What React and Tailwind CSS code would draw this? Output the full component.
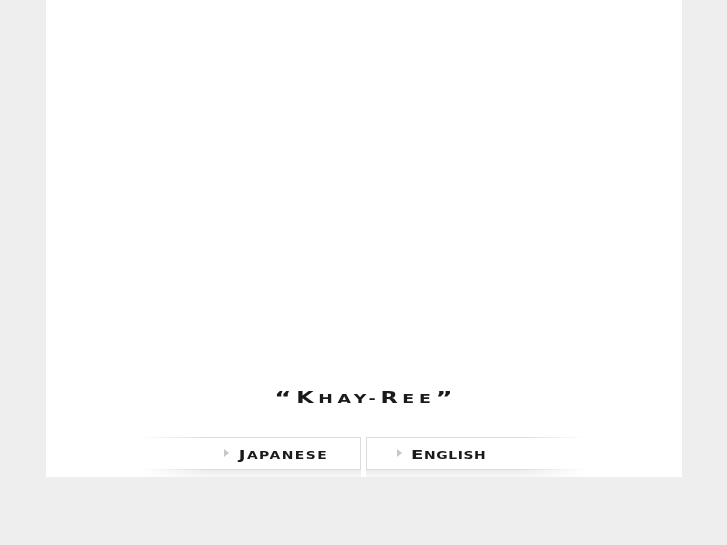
const font = { fontFamily: '"DejaVu Sans", "Liberation Sans", sans-serif' };

function SC({ parts, className = "" }) {
  return (
    <span className={`inline-block font-bold leading-none text-[#1a1a1a] ${className}`} style={font}>
      {parts.map(([t, cls], i) => (
        <span key={i} className={cls}>
          {t}
        </span>
      ))}
    </span>
  );
}

export default function App() {
  const fade = "[mask-image:linear-gradient(to_right,transparent,black_30%,black_100%)]";
  const fadeR = "[mask-image:linear-gradient(to_left,transparent,black_30%,black_100%)]";
  return (
    <div className="min-h-[545px] w-full bg-[#eeeeee]">
      <div className="mx-auto flex h-[477px] w-[636px] flex-col items-center justify-end bg-white">
        <div className="mb-[31px] flex justify-center">
          <SC
            className="origin-center scale-x-[1.45] tracking-[3.2px]"
            parts={[
              ["“", "text-[18px] relative top-[1px]"],
              ["K", "text-[15.5px]"],
              ["HAY-", "text-[12px]"],
              ["R", "text-[15.5px]"],
              ["EE", "text-[12px]"],
              ["”", "text-[18px] tracking-normal relative top-[1px]"],
            ]}
          />
        </div>
        <div className="relative mb-[7px] flex gap-[5px]">
          <div className="relative flex h-[33px] w-[221px] items-center justify-end pr-[34px]">
            <div className={`absolute inset-0 border border-l-0 border-[#dcdcdc] ${fade}`}></div>
            <div className={`absolute left-0 right-0 top-full h-[7px] bg-gradient-to-b from-[#ececec] to-[#f7f7f7] ${fade}`}></div>
            <span className="relative mr-[37px] h-0 w-0 translate-y-[-1px] border-y-[4px] border-l-[5px] border-y-transparent border-l-[#c8c8c8]"></span>
            <SC
              className="relative origin-right scale-x-[1.45] tracking-[1px]"
              parts={[["J", "text-[12.5px]"], ["APANES", "text-[9.6px]"], ["E", "text-[9.6px] tracking-normal"]]}
            />
          </div>
          <div className="relative flex h-[33px] w-[221px] items-center justify-start pl-[31px]">
            <div className={`absolute inset-0 border border-r-0 border-[#dcdcdc] ${fadeR}`}></div>
            <div className={`absolute left-0 right-0 top-full h-[7px] bg-gradient-to-b from-[#ececec] to-[#f7f7f7] ${fadeR}`}></div>
            <span className="relative mr-[9px] h-0 w-0 translate-y-[-1px] border-y-[4px] border-l-[5px] border-y-transparent border-l-[#c8c8c8]"></span>
            <SC
              className="relative origin-left scale-x-[1.45] tracking-[0.4px]"
              parts={[["E", "text-[12.5px]"], ["NGLIS", "text-[9.6px]"], ["H", "text-[9.6px] tracking-normal"]]}
            />
          </div>
        </div>
      </div>
    </div>
  );
}
